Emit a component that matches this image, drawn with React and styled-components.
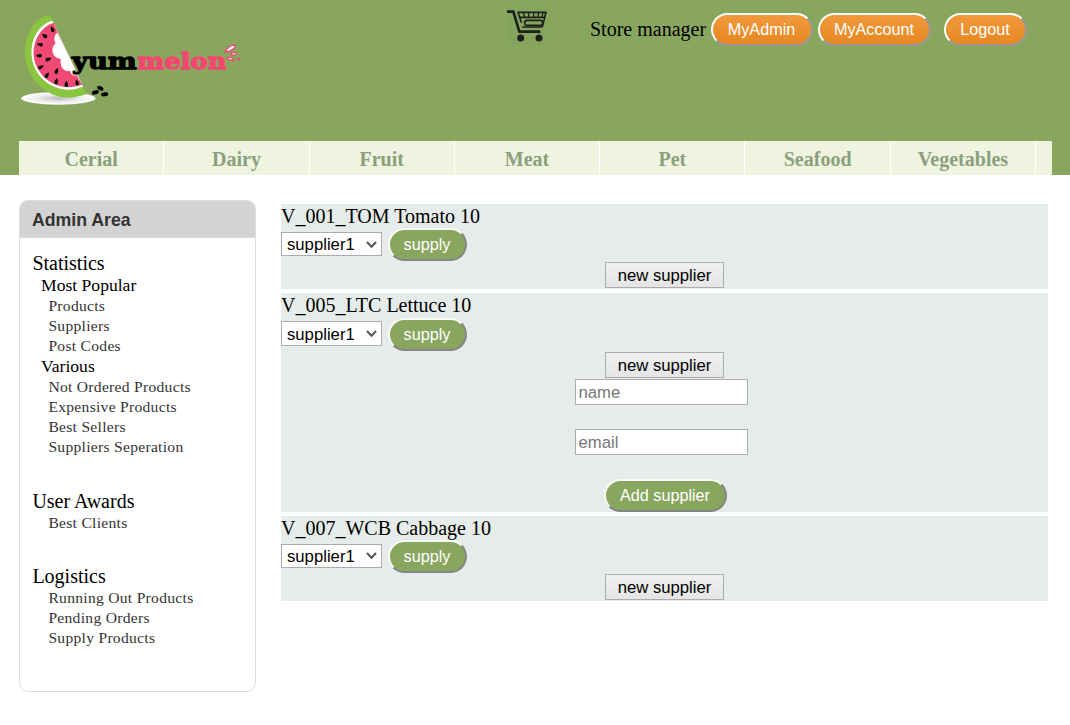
import React from "react";
import styled, { createGlobalStyle } from "styled-components";

const Global = createGlobalStyle`
  * { box-sizing: border-box; }
  body {
    margin: 0;
    background: #fff;
    color: #000;
    font-family: "Liberation Serif", "Times New Roman", serif;
    font-size: 20px;
    line-height: 24px;
  }
`;

const Header = styled.header`
  height: 175px;
  background: #89a65f;
  padding: 0 18px 0 19px;
  display: flex;
  flex-direction: column;
  justify-content: space-between;
`;
const TopBar = styled.div`
  display: flex;
  align-items: flex-start;
`;
const LogoArt = styled.svg`
  display: block;
  width: 230px;
  height: 110px;
  margin-left: -9px;
  margin-top: 5px;
`;
const CartArt = styled.svg`
  display: block;
  width: 42px;
  height: 42px;
  margin: 4px 0 0 266px;
`;
const Account = styled.div`
  display: flex;
  align-items: center;
  margin: 13px 0 0 42px;
  height: 33px;
  white-space: nowrap;
`;
const UserName = styled.span`
  width: 121px;
  padding-bottom: 2px;
`;
const Pill = styled.button`
  display: block;
  flex: none;
  width: ${(p) => p.$w}px;
  height: 33px;
  margin: 0 0 0 ${(p) => p.$ml || 0}px;
  padding: 0 1px 1px 0;
  border: 2px solid;
  border-color: ${(p) => (p.$orange ? "#fff #999 #999 #fff" : "#f8faf5 #858585 #858585 #f8faf5")};
  border-radius: 17px;
  background: ${(p) => (p.$orange ? "linear-gradient(#f09a3c, #e78722)" : "#89a65f")};
  color: #fff;
  font: 16.2px/20px "Liberation Sans", Arial, sans-serif;
  white-space: nowrap;
`;
const Nav = styled.nav`
  display: flex;
  height: 34px;
  background: #eff4e0;
`;
const NavItem = styled.a`
  width: 145.3px;
  border-right: 1px solid #fff;
  text-align: center;
  color: #8b9f7c;
  font-weight: bold;
  line-height: 36px;
`;
const Main = styled.main`
  display: flex;
  align-items: flex-start;
  padding: 25px 22px 0 19px;
`;
const Sidebar = styled.aside`
  width: 237px;
  height: 492px;
  border: 1px solid #ddd;
  border-radius: 9px;
  overflow: hidden;
`;
const SidebarTitle = styled.h2`
  margin: 0;
  height: 37px;
  padding-left: 12px;
  background: #d3d3d3;
  border-bottom: 1px solid #ddd;
  color: #333;
  font: bold 17.7px/38px "Liberation Sans", Arial, sans-serif;
`;
const SidebarBody = styled.div`
  padding: 13px 0 0 12.4px;
`;
const Group = styled.section`
  margin-bottom: ${(p) => p.$gap || 0}px;
`;
const GroupTitle = styled.h3`
  margin: 0;
  font-size: 20px;
  font-weight: normal;
  line-height: 24px;
`;
const SubTitle = styled.h4`
  margin: 0;
  padding-left: 8.6px;
  font-size: 17.6px;
  font-weight: normal;
  line-height: 21px;
`;
const SideLink = styled.a`
  display: block;
  padding-left: 16px;
  color: #333;
  font-size: 15.6px;
  letter-spacing: 0.28px;
  line-height: 20px;
`;
const List = styled.div`
  flex: 1;
  margin: 4px 0 0 25px;
`;
const Row = styled.section`
  height: ${(p) => (p.$open ? 218.4 : 85.4)}px;
  margin-bottom: 4px;
  background: #e6ecea;
`;
const RowTitle = styled.div`
  height: 24.2px;
  line-height: 24px;
`;
const Controls = styled.div`
  display: flex;
  height: 34px;
  align-items: flex-start;
`;
const SelectBox = styled.div`
  display: grid;
  width: 101px;
  height: 24.6px;
  margin-top: 3.7px;
  align-items: center;
  & > * { grid-area: 1 / 1; }
`;
const Select = styled.select`
  appearance: none;
  width: 100%;
  height: 100%;
  margin: 0;
  padding: 1px 0 0 5px;
  border: 1px solid #abadb3;
  border-radius: 0;
  background: #fff;
  color: #000;
  font: 16.7px "Liberation Sans", Arial, sans-serif;
`;
const Chevron = styled.svg`
  width: 11px;
  height: 9px;
  justify-self: end;
  margin-right: 5px;
  pointer-events: none;
`;
const Form = styled.div`
  display: flex;
  flex-direction: column;
  align-items: center;
`;
const PlainButton = styled.button`
  width: 119px;
  height: 26px;
  padding: 2px 0 0;
  border: 1px solid #acacac;
  background: linear-gradient(#f0f0f0, #e5e5e5);
  color: #000;
  font: 16.7px "Liberation Sans", Arial, sans-serif;
`;
const Field = styled.input`
  width: 173px;
  height: 26px;
  margin: ${(p) => p.$mt}px 7px 0 0;
  padding: 3px 3px 0;
  border: 1px solid #acacac;
  background: #fff;
  font: 16.7px "Liberation Sans", Arial, sans-serif;
  &::placeholder { color: #777; }
`;
const AddLine = styled.div`
  margin: 24.2px 0 0 2px;
`;

const SEEDS = [
  [127, 73, -25], [104, 93, -55], [90, 119, -80], [87, 152, -90], [93, 186, -115],
  [111, 211, -145], [139, 229, -170], [169, 237, 180], [201, 233, 165], [115, 163, -110], [140, 198, -160],
];

const Seed = ({ x, y, r }) => (
  <path d="M0 -10C4 -3 6 1 5 5C4 10 -4 10 -5 5C-6 1 -4 -3 0 -10Z" transform={`translate(${x} ${y}) rotate(${r > 90 || r < -90 ? r + 180 : r})`} />
);

function Logo() {
  return (
    <LogoArt viewBox="0 0 690 330" aria-label="yummelon">
      <defs>
        <radialGradient id="plate">
          <stop offset="0" stopColor="#bbb" />
          <stop offset="0.6" stopColor="#eee" />
          <stop offset="1" stopColor="#fff" />
        </radialGradient>
      </defs>
      <ellipse cx="145" cy="280" rx="112" ry="19" fill="url(#plate)" />
      <path d="M120 29C70 40 38 98 46 158C56 234 128 290 196 276Q214 273 229 268Z" fill="#8ac53f" />
      <path d="M128 47C84 58 58 108 66 160C75 224 140 266 200 251L219 245Z" fill="#fff" />
      <path d="M131 53C90 66 65 112 72 160C82 218 142 258 198 244L216 239L198 206L143 82Z" fill="#ef4a73" />
      <path d="M142 83L203 209C192 215 181 210 181 198C164 201 149 189 152 161C128 162 119 129 137 115C129 101 134 88 142 83Z" fill="#fff" />
      <g fill="#000">
        {SEEDS.map(([x, y, r]) => <Seed key={`${x}-${y}`} x={x} y={y} r={r} />)}
        <ellipse cx="271" cy="250" rx="10" ry="6" transform="rotate(30 271 250)" />
        <ellipse cx="256" cy="262" rx="11" ry="6" transform="rotate(-18 256 262)" />
        <ellipse cx="284" cy="268" rx="11" ry="6" transform="rotate(-10 284 268)" />
      </g>
      <g fontFamily='"DejaVu Serif", serif' fontWeight="bold" fontSize="69" strokeWidth="4" strokeLinejoin="round">
        <text x="186" y="191" textLength="194" lengthAdjust="spacingAndGlyphs" fill="#000" stroke="#000">yum</text>
        <text x="382" y="191" textLength="267" lengthAdjust="spacingAndGlyphs" fill="#f24870" stroke="#f24870">melon</text>
      </g>
      <g fill="#fff" stroke="#f24870" strokeWidth="4">
        <path d="M645 142C650 127 666 119 676 122C675 133 660 139 645 142Z" />
        <path d="M662 149C667 142 676 140 680 144C677 151 669 151 662 149Z" />
        <path d="M651 158C660 156 668 159 672 165C664 167 656 165 651 158Z" />
        <path d="M682 161C686 159 690 161 692 164C687 166 684 164 682 161Z" />
      </g>
    </LogoArt>
  );
}

function Cart() {
  return (
    <CartArt viewBox="48 12 126 126" aria-label="Cart">
      <path d="M51 18H168V134H51Z" fill="#85a45d" />
      <g fill="none" stroke="#1c211b" strokeLinecap="round" strokeLinejoin="round">
        <path d="M51 35H70L88 95H151" strokeWidth="8" strokeLinecap="butt" />
        <path d="M84 37H168L164 52H89Z" strokeWidth="5" />
        <path d="M100 37L104 52M115 37L117 52M131 37V52M146 37L144 52M159 37L156 52" strokeWidth="4" />
        <path d="M89 52L94 67M164 52L158 78Q157 81 153 81H98" strokeWidth="4.5" />
        <rect x="104" y="61" width="54" height="15" rx="7" strokeWidth="5" />
      </g>
      <circle cx="92" cy="114" r="10.5" fill="#1c211b" />
      <circle cx="147" cy="114" r="10.5" fill="#1c211b" />
    </CartArt>
  );
}

const CATEGORIES = ["Cerial", "Dairy", "Fruit", "Meat", "Pet", "Seafood", "Vegetables"];
const PRODUCTS = [
  { label: "V_001_TOM Tomato 10" },
  { label: "V_005_LTC Lettuce 10", open: true },
  { label: "V_007_WCB Cabbage 10" },
];

const Links = ({ items }) => items.map((t) => <SideLink key={t}>{t}</SideLink>);

function ProductRow({ label, open }) {
  return (
    <Row $open={open}>
      <RowTitle>{label}</RowTitle>
      <Controls>
        <SelectBox>
          <Select><option>supplier1</option></Select>
          <Chevron viewBox="0 0 11 9">
            <path d="M1 2L5.5 6.7L10 2" fill="none" stroke="#555" strokeWidth="2" />
          </Chevron>
        </SelectBox>
        <Pill $w={79} $ml={6}>supply</Pill>
      </Controls>
      <Form>
        <PlainButton>new supplier</PlainButton>
        {open && (
          <>
            <Field $mt={1.2} placeholder="name" />
            <Field $mt={24} placeholder="email" />
            <AddLine><Pill $w={123}>Add supplier</Pill></AddLine>
          </>
        )}
      </Form>
    </Row>
  );
}

export default function App() {
  return (
    <>
      <Global />
      <Header>
        <TopBar>
          <Logo />
          <Cart />
          <Account>
            <UserName>Store manager</UserName>
            <Pill $orange $w={102}>MyAdmin</Pill>
            <Pill $orange $w={113} $ml={5}>MyAccount</Pill>
            <Pill $orange $w={83} $ml={13}>Logout</Pill>
          </Account>
        </TopBar>
        <Nav>{CATEGORIES.map((c) => <NavItem key={c}>{c}</NavItem>)}</Nav>
      </Header>
      <Main>
        <Sidebar>
          <SidebarTitle>Admin Area</SidebarTitle>
          <SidebarBody>
            <Group $gap={32}>
              <GroupTitle>Statistics</GroupTitle>
              <SubTitle>Most Popular</SubTitle>
              <Links items={["Products", "Suppliers", "Post Codes"]} />
              <SubTitle>Various</SubTitle>
              <Links items={["Not Ordered Products", "Expensive Products", "Best Sellers", "Suppliers Seperation"]} />
            </Group>
            <Group $gap={31}>
              <GroupTitle>User Awards</GroupTitle>
              <Links items={["Best Clients"]} />
            </Group>
            <Group>
              <GroupTitle>Logistics</GroupTitle>
              <Links items={["Running Out Products", "Pending Orders", "Supply Products"]} />
            </Group>
          </SidebarBody>
        </Sidebar>
        <List>{PRODUCTS.map((p) => <ProductRow key={p.label} {...p} />)}</List>
      </Main>
    </>
  );
}
